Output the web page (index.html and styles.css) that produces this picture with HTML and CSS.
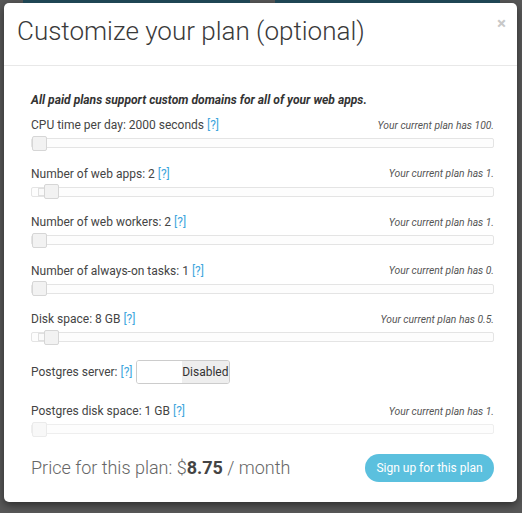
FILE: index.html
```html
<!DOCTYPE html>
<html>
<head>
<meta charset="utf-8">
<link rel="stylesheet" href="styles.css">
</head>
<body>
<div class="backdrop-strip"><span class="bar bar-a"></span><span class="bar bar-b"></span></div>
<div class="modal">
  <div class="modal-header">
    <h4 class="modal-title">Customize your plan (optional)</h4>
    <span class="close">×</span>
  </div>
  <div class="modal-body">
    <p class="intro">All paid plans support custom domains for all of your web apps.</p>
    <div class="rows">
      <div class="row">
        <div class="row-top"><span class="label">CPU time per day: 2000 seconds <a class="help">[?]</a></span><span class="note">Your current plan has 100.</span></div>
        <div class="track"><span class="handle"></span></div>
      </div>
      <div class="row">
        <div class="row-top"><span class="label">Number of web apps: 2 <a class="help">[?]</a></span><span class="note">Your current plan has 1.</span></div>
        <div class="track"><span class="fill"></span><span class="handle"></span></div>
      </div>
      <div class="row">
        <div class="row-top"><span class="label">Number of web workers: 2 <a class="help">[?]</a></span><span class="note">Your current plan has 1.</span></div>
        <div class="track"><span class="handle"></span></div>
      </div>
      <div class="row">
        <div class="row-top"><span class="label">Number of always-on tasks: 1 <a class="help">[?]</a></span><span class="note">Your current plan has 0.</span></div>
        <div class="track"><span class="handle"></span></div>
      </div>
      <div class="row">
        <div class="row-top"><span class="label">Disk space: 8 GB <a class="help">[?]</a></span><span class="note">Your current plan has 0.5.</span></div>
        <div class="track"><span class="fill"></span><span class="handle"></span></div>
      </div>
      <div class="row row-switch">
        <span class="label">Postgres server: <a class="help">[?]</a></span>
        <div class="switch"><span class="switch-on"></span><span class="switch-off">Disabled</span></div>
      </div>
      <div class="row">
        <div class="row-top"><span class="label">Postgres disk space: 1 GB <a class="help">[?]</a></span><span class="note">Your current plan has 1.</span></div>
        <div class="track faded"><span class="handle"></span></div>
      </div>
    </div>
    <div class="footer">
      <div class="price">Price for this plan: $<b>8.75</b> / month</div>
      <button class="signup">Sign up for this plan</button>
    </div>
  </div>
</div>
</body>
</html>
```

FILE: styles.css
```css
html, body {
  margin: 0;
  padding: 0;
}
body {
  width: 522px;
  height: 513px;
  background: #585858;
  font-family: Roboto, "Liberation Sans", sans-serif;
  color: #444;
  overflow: hidden;
}
.backdrop-strip {
  height: 3px;
  display: flex;
  padding-left: 23px;
  gap: 25px;
}
.bar {
  display: block;
  height: 3px;
  background: #1f4654;
}
.bar-a { width: 227px; }
.bar-b { width: 225px; }
.modal {
  margin-left: 4px;
  width: 513px;
  height: 499px;
  background: #fff;
  border-radius: 5px;
  box-shadow: 0 3px 9px rgba(0,0,0,0.5);
  display: flex;
  flex-direction: column;
}
.modal-header {
  height: 63px;
  box-sizing: border-box;
  border-bottom: 1px solid #e8e8e8;
  display: flex;
  align-items: center;
  justify-content: space-between;
  padding: 0 11px 6px 13px;
}
.modal-title {
  margin: 0;
  font-size: 26px;
  font-weight: 300;
  color: #3a3a3a;
  line-height: 30px;
}
.close {
  font-size: 17px;
  font-weight: bold;
  color: #c8c8c8;
  align-self: flex-start;
  margin-top: 10px;
}
.modal-body {
  padding: 26px 23px 0 27px;
}
.intro {
  margin: 0 0 8px;
  font-size: 12.1px;
  font-weight: bold;
  font-style: italic;
  line-height: 16px;
  color: #333;
}
.rows {
  display: flex;
  flex-direction: column;
  gap: 16.5px;
}
.row-top {
  height: 18px;
  display: flex;
  align-items: center;
  justify-content: space-between;
  margin-bottom: 4px;
}
.label {
  font-size: 12px;
  color: #444;
  line-height: 18px;
}
.help {
  color: #3ea6dd;
}
.note {
  font-size: 10.3px;
  font-style: italic;
  color: #555;
}
.track {
  height: 10px;
  box-sizing: border-box;
  border: 1px solid #e4e4e4;
  border-radius: 2px;
  background: #fdfdfd;
  display: flex;
  align-items: center;
  overflow: visible;
}
.fill {
  display: block;
  width: 6px;
  height: 8px;
  margin-left: 6px;
  border: 1px solid #e0e0e0;
  border-right: none;
  box-sizing: border-box;
  background: #fafafa;
}
.handle {
  display: block;
  width: 15px;
  height: 15px;
  box-sizing: border-box;
  border: 1px solid #d6d6d6;
  border-radius: 2px;
  background: #f2f2f2;
}
.faded .handle {
  border-color: #ebebeb;
  background: #f8f8f8;
}
.faded { border-color: #eeeeee; }
.row-switch {
  display: flex;
  align-items: center;
  gap: 3px;
  margin: 1.5px 0;
}
.switch {
  display: flex;
  width: 94px;
  height: 24px;
  box-sizing: border-box;
  border: 1px solid #ccc;
  border-radius: 3px;
  overflow: hidden;
}
.switch-on {
  width: 46px;
  background: #fff;
}
.switch-off {
  flex: 1;
  background: #eeeeee;
  font-size: 12px;
  color: #333;
  display: flex;
  align-items: center;
  justify-content: center;
}
.footer {
  margin-top: 17px;
  display: flex;
  align-items: center;
  justify-content: space-between;
}
.price {
  font-size: 18px;
  font-weight: 300;
  color: #666;
  margin-bottom: -1px;
}
.price b {
  font-weight: bold;
  color: #444;
}
.signup {
  width: 129px;
  height: 28px;
  border: none;
  border-radius: 14px;
  background: #5bc0de;
  color: #fff;
  font-family: Roboto, "Liberation Sans", sans-serif;
  font-size: 12px;
  padding: 0;
  margin-top: 3px;
}
```
